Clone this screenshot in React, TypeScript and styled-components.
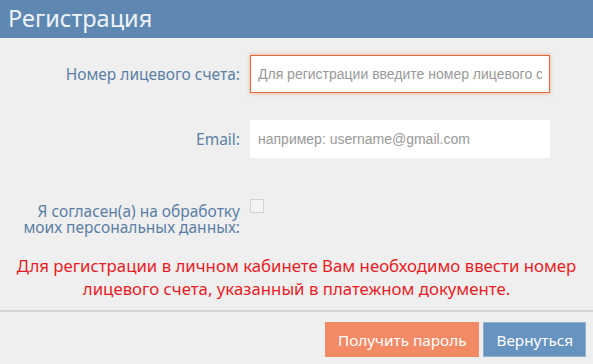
import React from "react";
import styled, { createGlobalStyle } from "styled-components";

const GlobalStyle = createGlobalStyle`
  html, body { margin: 0; padding: 0; }
  body { background: #efefef; font-family: "Noto Sans", "Open Sans", sans-serif; }
`;

const Page = styled.div`
  width: 593px;
  height: 364px;
  background: #efefef;
  display: flex;
  flex-direction: column;
`;

const Header = styled.div`
  flex-shrink: 0;
  height: 38px;
  background: #5e88b1;
  color: #eef3f8;
  font-size: 23.5px;
  line-height: 36px;
  padding-left: 8px;
  box-sizing: border-box;
`;

const Form = styled.div`
  flex-shrink: 0;
  display: flex;
  flex-direction: column;
  padding-top: 17px;
`;

const Row = styled.div<{ $top?: number; $align?: string }>`
  display: grid;
  grid-template-columns: 240px 300px;
  column-gap: 10px;
  align-items: ${(p) => p.$align || "center"};
  margin-top: ${(p) => p.$top || 0}px;
`;

const Label = styled.label<{ $wrap?: number }>`
  text-align: right;
  color: #5b7fa6;
  font-size: 15.5px;
  line-height: 16px;
  justify-self: end;
  width: ${(p) => (p.$wrap ? `${p.$wrap}px` : "auto")};
`;

const Input = styled.input<{ $focused?: boolean }>`
  height: 38px;
  width: 300px;
  box-sizing: border-box;
  border: 1px solid ${(p) => (p.$focused ? "#e2683a" : "#fff")};
  box-shadow: ${(p) => (p.$focused ? "0 0 4px rgba(236,120,70,0.6)" : "none")};
  background: #fff;
  outline: none;
  padding: 0 7px;
  font-family: "Liberation Sans", Arial, sans-serif;
  font-size: 14px;
  color: #333;
  &::placeholder { color: #999; }
`;

const Check = styled.span`
  width: 14px;
  height: 14px;
  box-sizing: border-box;
  border: 1px solid #d4d4d4;
  background: #f3f3f3;
  margin-top: -4px;
`;

const Notice = styled.div`
  margin-top: 19px;
  text-align: center;
  color: #e81d25;
  font-size: 16.8px;
  line-height: 23px;
`;

const Footer = styled.div`
  margin-top: auto;
  border-top: 2px solid #d5d5d5;
  display: flex;
  justify-content: flex-end;
  gap: 4px;
  padding: 10px 7px 7px 0;
`;

const Button = styled.button<{ $variant: "orange" | "blue" }>`
  height: 35px;
  border: 1px solid ${(p) => (p.$variant === "orange" ? "#f28a65" : "#8fb0cf")};
  background: ${(p) => (p.$variant === "orange" ? "#f28a65" : "#6693c0")};
  color: #fff;
  font-family: "Noto Sans", "Open Sans", sans-serif;
  font-size: 15.3px;
  padding: 0 12px;
  cursor: pointer;
`;

const App: React.FC = () => {
  return (
    <>
      <GlobalStyle />
      <Page>
        <Header>Регистрация</Header>
        <Form>
          <Row>
            <Label>Номер лицевого счета:</Label>
            <Input $focused placeholder="Для регистрации введите номер лицевого счета" />
          </Row>
          <Row $top={27}>
            <Label>Email:</Label>
            <Input placeholder="например: username@gmail.com" />
          </Row>
          <Row $top={45} $align="start">
            <Label $wrap={226}>Я согласен(а) на обработку моих персональных данных:</Label>
            <Check />
          </Row>
          <Notice>
            Для регистрации в личном кабинете Вам необходимо ввести номер
            <br />
            лицевого счета, указанный в платежном документе.
          </Notice>
        </Form>
        <Footer>
          <Button $variant="orange">Получить пароль</Button>
          <Button $variant="blue">Вернуться</Button>
        </Footer>
      </Page>
    </>
  );
};

export default App;
